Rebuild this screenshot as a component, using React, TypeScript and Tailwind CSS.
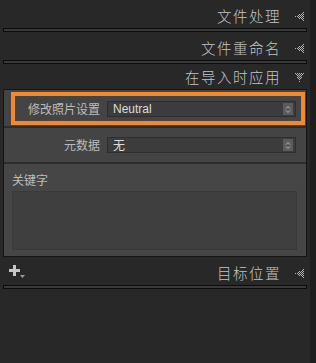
import React from "react";

const cjk = { fontFamily: '"Noto Sans CJK SC", "Noto Sans", sans-serif' };

// dotted triangle, like the panel disclosure arrows
function DotArrow({ down = false }: { down?: boolean }) {
  const dots: [number, number][] = [];
  for (let a = 0; a < 9; a++) {
    for (let b = 0; b < 9; b++) {
      if ((a + b) % 2 !== 0) continue;
      // a: distance from apex, b: cross axis
      if (Math.abs(b - 4) > a / 2 + 0.01) continue;
      dots.push(down ? [b, 8 - a] : [a, b]);
    }
  }
  return (
    <svg width="9" height="9" viewBox="0 0 9 9" className="shrink-0">
      {dots.map(([x, y]) => (
        <rect key={`${x}-${y}`} x={x} y={y} width="1" height="1" fill="#b4b4b4" />
      ))}
    </svg>
  );
}

function Header({ title, open = false, h = "h-[28px]", children }: { title: string; open?: boolean; h?: string; children?: React.ReactNode }) {
  return (
    <div className={`flex ${h} items-end pb-[5px] pl-[9px] pr-[6px]`}>
      {children}
      <span className="ml-auto text-[14.5px] font-light leading-[14px] tracking-[1.5px] text-[#c4c4c4]" style={cjk}>
        {title}
      </span>
      <span className="ml-[14px] mb-[2px]">
        <DotArrow down={open} />
      </span>
    </div>
  );
}

function Separator() {
  return <div className="mx-[3px] h-[4px] border border-[#0c0c0c] bg-[#383838]" />;
}

function Stepper() {
  return (
    <div className="mr-[2px] flex h-[12px] w-[10px] items-center justify-center bg-[#5b5b5b]">
      <svg width="6" height="9" viewBox="0 0 6 9">
        <path d="M1 3.5 L3 1.5 L5 3.5" stroke="#b8b8b8" strokeWidth="1" fill="none" />
        <path d="M1 5.5 L3 7.5 L5 5.5" stroke="#b8b8b8" strokeWidth="1" fill="none" />
      </svg>
    </div>
  );
}

function Select({ value, cn = false }: { value: string; cn?: boolean }) {
  return (
    <div className="flex h-[16px] w-[189px] items-center border border-[#2e2e2e] bg-[#3c3c3c] pl-[5px]">
      <span
        className="text-[12px] leading-[14px] text-[#dcdcdc]"
        style={cn ? cjk : { fontFamily: '"Liberation Sans", Arial, sans-serif' }}
      >
        {value}
      </span>
      <div className="ml-auto">
        <Stepper />
      </div>
    </div>
  );
}

function Row({ label, value, cn, className }: { label: string; value: string; cn?: boolean; className: string }) {
  return (
    <div className={`flex ${className}`}>
      <span className="w-[96px] text-right text-[12px] leading-[16px] text-[#bcbcbc]" style={cjk}>
        {label}
      </span>
      <div className="ml-[7px]">
        <Select value={value} cn={cn} />
      </div>
    </div>
  );
}

function PlusMenu() {
  return (
    <svg width="16" height="14" viewBox="0 0 16 14" className="mb-[1px]">
      <rect x="0" y="4" width="11" height="3" fill="#c6c6c6" />
      <rect x="4" y="0" width="3" height="11" fill="#c6c6c6" />
      <path d="M11 10 L16 10 L13.5 13 Z" fill="#9a9a9a" />
    </svg>
  );
}

export default function App() {
  return (
    <div className="flex h-[363px] w-[316px] bg-[#1e1e1e]">
      <div className="w-[310px] bg-[#282828]">
        <Header title="文件处理" />
        <Separator />
        <Header title="文件重命名" />
        <Separator />
        <Header title="在导入时应用" open h="h-[25px]" />

        {/* apply during import panel */}
        <div className="mx-[3px] border border-[#151515] bg-[#444444]">
          <div className="relative border-b-2 border-[#2c2c2c]">
            <Row label="修改照片设置" value="Neutral" className="h-[36px] pt-[11px]" />
            <div className="absolute left-[7px] right-[1px] top-[2px] bottom-[1px] border-4 border-[#f28a2c]" />
          </div>
          <div className="border-b-2 border-[#2c2c2c]">
            <Row label="元数据" value="无" cn className="h-[34px] pt-[9px]" />
          </div>
          <div className="px-[8px] pt-[8px] pb-[6px] bg-[#464646]">
            <div className="text-[12px] leading-[16px] text-[#bcbcbc]" style={cjk}>
              关键字
            </div>
            <div className="mt-[3px] h-[59px] w-[285px] border border-[#3a3a3a] bg-[#3f3f3f]" />
          </div>
        </div>

        <Header title="目标位置">
          <PlusMenu />
        </Header>
        <Separator />
      </div>
    </div>
  );
}
